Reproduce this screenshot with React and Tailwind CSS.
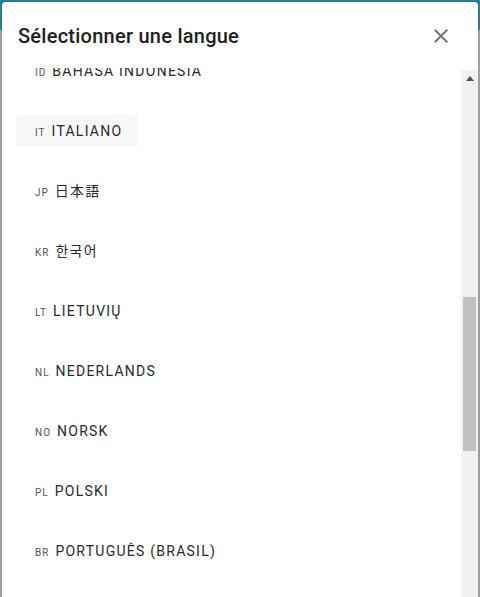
import React from 'react';

const languages = [
  { code: 'ID', name: 'BAHASA INDONESIA' },
  { code: 'IT', name: 'ITALIANO', hover: true },
  { code: 'JP', name: '日本語' },
  { code: 'KR', name: '한국어' },
  { code: 'LT', name: 'LIETUVIŲ' },
  { code: 'NL', name: 'NEDERLANDS' },
  { code: 'NO', name: 'NORSK' },
  { code: 'PL', name: 'POLSKI' },
  { code: 'BR', name: 'PORTUGUÊS (BRASIL)' },
];

function CloseIcon() {
  return (
    <svg width="24" height="24" viewBox="0 0 24 24" fill="#757575">
      <path d="M19 6.41 17.59 5 12 10.59 6.41 5 5 6.41 10.59 12 5 17.59 6.41 19 12 13.41 17.59 19 19 17.59 13.41 12z" />
    </svg>
  );
}

function Scrollbar() {
  return (
    <div className="w-[17px] shrink-0 bg-[#f1f1f1] flex flex-col mt-[2px]">
      <div className="h-[17px] flex items-center justify-center">
        <svg width="8" height="5" viewBox="0 0 8 5">
          <path d="M4 0 8 5H0z" fill="#505050" />
        </svg>
      </div>
      <div className="mt-[210px] mx-[2px] h-[154px] bg-[#c1c1c1]" />
    </div>
  );
}

export default function App() {
  return (
    <div
      className="relative h-[597px] w-[480px] overflow-hidden bg-[#9e9e9e]"
      style={{ fontFamily: 'Roboto, "Noto Sans CJK JP", "Noto Sans CJK KR", sans-serif' }}
    >
      <div className="h-[30px] bg-[#2a7b98]" />

      <div className="absolute left-[2px] top-[2px] w-[476px] h-[640px] bg-white rounded-t-[4px] flex flex-col">
        <div className="h-[66px] shrink-0 flex items-center justify-between pl-4 pr-[25px]">
          <h2 className="text-[20px] font-medium text-[#212121] tracking-[0.25px] pt-[1px]">
            Sélectionner une langue
          </h2>
          <button className="pt-[1px]">
            <CloseIcon />
          </button>
        </div>

        <div className="flex flex-1 min-h-0">
          <div className="flex-1 overflow-hidden">
            <div className="-mt-[27px]">
              {languages.map((l) => (
                <div key={l.code} className="h-[60px] flex items-center pl-[14px]">
                  <button
                    className={
                      'h-8 flex items-baseline gap-[6px] pl-[19px] pr-4 rounded ' +
                      (l.hover ? 'bg-[#f7f7f7]' : '')
                    }
                  >
                    <span className="text-[10px] tracking-[1px] text-[#555] leading-8">{l.code}</span>
                    <span className="text-[14px] tracking-[1.25px] text-[#2a2a2a] leading-8">{l.name}</span>
                  </button>
                </div>
              ))}
            </div>
          </div>
          <Scrollbar />
        </div>
      </div>
    </div>
  );
}
